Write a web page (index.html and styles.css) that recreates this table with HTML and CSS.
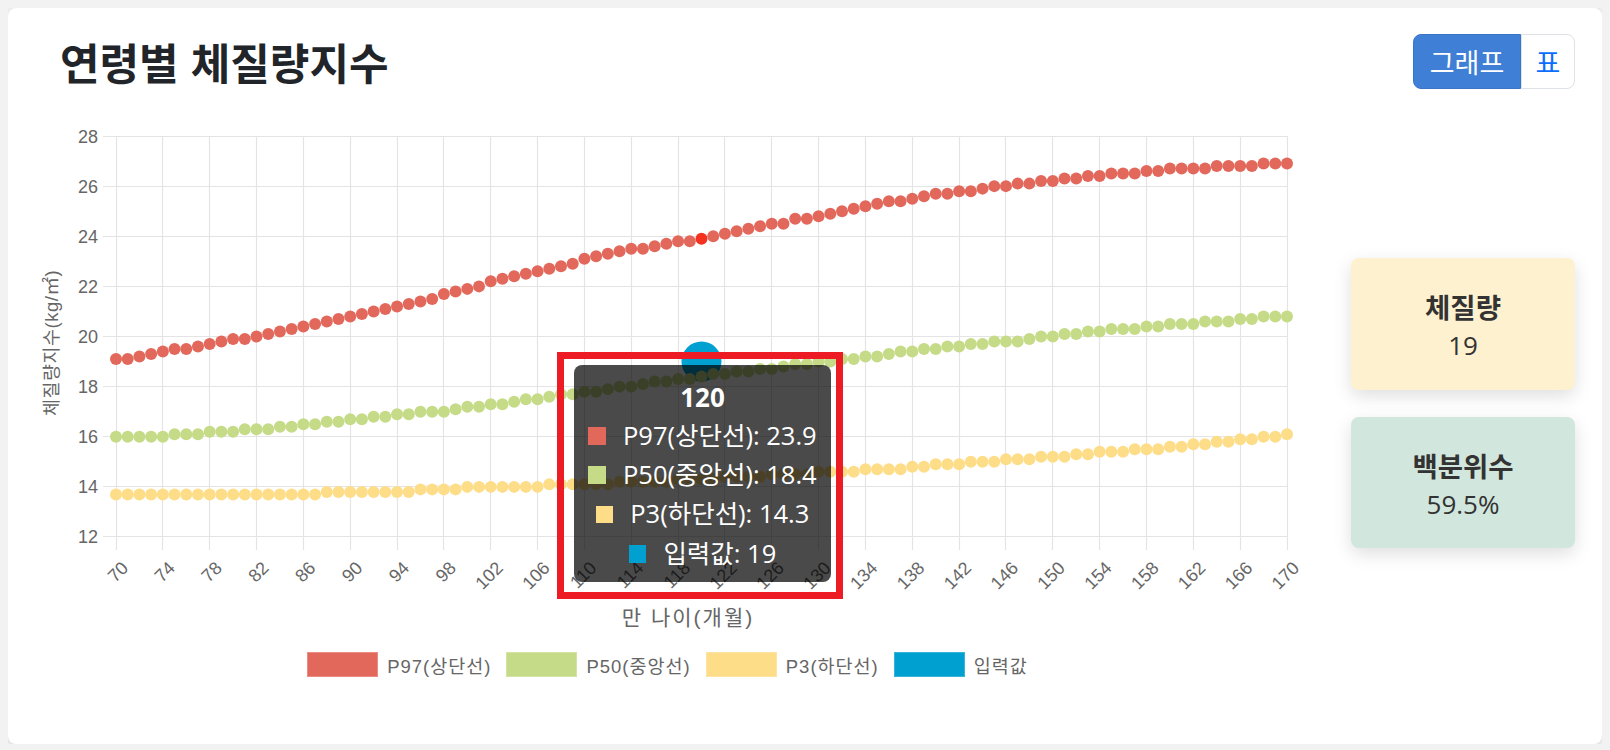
FILE: index.html
```html
<!DOCTYPE html>
<html lang="ko">
<head>
<meta charset="utf-8">
<title>연령별 체질량지수</title>
<link rel="stylesheet" href="styles.css">
</head>
<body>
<main class="card">
  <header class="card-head">
    <h1 class="title">연령별 체질량지수</h1>
    <div class="btn-group">
      <button class="btn btn-active" type="button">그래프</button>
      <button class="btn btn-plain" type="button">표</button>
    </div>
  </header>
  <section class="card-body">
    <div class="chart-col">
      <div class="chart-wrap">
        <svg class="chart" width="1265" height="535" viewBox="35 100 1265 535">
          <g class="grid">
            <path d="M103 136.5H1287.5M103 186.5H1287.5M103 236.5H1287.5M103 286.5H1287.5M103 336.5H1287.5M103 386.5H1287.5M103 436.5H1287.5M103 486.5H1287.5M103 536.5H1287.5"/>
            <path d="M116.5 136V550M162.5 136V550M209.5 136V550M256.5 136V550M303.5 136V550M350.5 136V550M397.5 136V550M443.5 136V550M490.5 136V550M537.5 136V550M584.5 136V550M631.5 136V550M678.5 136V550M724.5 136V550M771.5 136V550M818.5 136V550M865.5 136V550M912.5 136V550M959.5 136V550M1005.5 136V550M1052.5 136V550M1099.5 136V550M1146.5 136V550M1193.5 136V550M1240.5 136V550M1287.5 136V550"/>
          </g>
          <g class="tick y-tick">
            <text x="98" y="142.5">28</text>
            <text x="98" y="192.6">26</text>
            <text x="98" y="242.6">24</text>
            <text x="98" y="292.7">22</text>
            <text x="98" y="342.7">20</text>
            <text x="98" y="392.8">18</text>
            <text x="98" y="442.9">16</text>
            <text x="98" y="492.9">14</text>
            <text x="98" y="543">12</text>
          </g>
          <g class="tick x-tick">
            <text transform="translate(124.7 564.6) rotate(-45)" y="6.5">70</text>
            <text transform="translate(171.5 564.6) rotate(-45)" y="6.5">74</text>
            <text transform="translate(218.4 564.6) rotate(-45)" y="6.5">78</text>
            <text transform="translate(265.2 564.6) rotate(-45)" y="6.5">82</text>
            <text transform="translate(312.1 564.6) rotate(-45)" y="6.5">86</text>
            <text transform="translate(358.9 564.6) rotate(-45)" y="6.5">90</text>
            <text transform="translate(405.7 564.6) rotate(-45)" y="6.5">94</text>
            <text transform="translate(452.6 564.6) rotate(-45)" y="6.5">98</text>
            <text transform="translate(499.4 564.6) rotate(-45)" y="6.5">102</text>
            <text transform="translate(546.3 564.6) rotate(-45)" y="6.5">106</text>
            <text transform="translate(593.1 564.6) rotate(-45)" y="6.5">110</text>
            <text transform="translate(639.9 564.6) rotate(-45)" y="6.5">114</text>
            <text transform="translate(686.8 564.6) rotate(-45)" y="6.5">118</text>
            <text transform="translate(733.6 564.6) rotate(-45)" y="6.5">122</text>
            <text transform="translate(780.5 564.6) rotate(-45)" y="6.5">126</text>
            <text transform="translate(827.3 564.6) rotate(-45)" y="6.5">130</text>
            <text transform="translate(874.1 564.6) rotate(-45)" y="6.5">134</text>
            <text transform="translate(921.0 564.6) rotate(-45)" y="6.5">138</text>
            <text transform="translate(967.8 564.6) rotate(-45)" y="6.5">142</text>
            <text transform="translate(1014.7 564.6) rotate(-45)" y="6.5">146</text>
            <text transform="translate(1061.5 564.6) rotate(-45)" y="6.5">150</text>
            <text transform="translate(1108.3 564.6) rotate(-45)" y="6.5">154</text>
            <text transform="translate(1155.2 564.6) rotate(-45)" y="6.5">158</text>
            <text transform="translate(1202.0 564.6) rotate(-45)" y="6.5">162</text>
            <text transform="translate(1248.9 564.6) rotate(-45)" y="6.5">166</text>
            <text transform="translate(1295.7 564.6) rotate(-45)" y="6.5">170</text>
          </g>
          <text class="axis-title axis-title-y" transform="translate(51 343) rotate(-90)">체질량지수(kg/㎡)</text>
          <text class="axis-title axis-title-x" x="688" y="617">만 나이(개월)</text>
          <circle class="input-pt" cx="701.5" cy="361.6" r="20"/>
          <g id="series"></g>
        </svg>
        <div class="tooltip">
          <div class="tt-title">120</div>
          <div class="tt-line"><span class="tt-box sw-p97"></span>P97(상단선): 23.9</div>
          <div class="tt-line"><span class="tt-box sw-p50"></span>P50(중앙선): 18.4</div>
          <div class="tt-line"><span class="tt-box sw-p3"></span>P3(하단선): 14.3</div>
          <div class="tt-line"><span class="tt-box sw-input"></span>입력값: 19</div>
        </div>
        <div class="highlight"></div>
      </div>
      <ul class="legend">
        <li class="legend-item"><span class="swatch sw-p97"></span>P97(상단선)</li>
        <li class="legend-item"><span class="swatch sw-p50"></span>P50(중앙선)</li>
        <li class="legend-item"><span class="swatch sw-p3"></span>P3(하단선)</li>
        <li class="legend-item"><span class="swatch sw-input"></span>입력값</li>
      </ul>
    </div>
    <aside class="stats">
      <div class="stat stat-yellow">
        <div class="stat-label">체질량</div>
        <div class="stat-value">19</div>
      </div>
      <div class="stat stat-green">
        <div class="stat-label">백분위수</div>
        <div class="stat-value">59.5%</div>
      </div>
    </aside>
  </section>
</main>
<script src="script.js"></script>
</body>
</html>
```

FILE: styles.css
```css
html, body {
  margin: 0;
}
body {
  margin: 8px;
  background: #f2f2f2;
  font-family: "Noto Sans CJK KR", "Noto Sans", sans-serif;
}
.card {
  box-sizing: border-box;
  height: 736px;
  background: #fff;
  border-radius: 8px;
  box-shadow: 0 1px 7px rgba(0, 0, 0, 0.13);
  padding: 26px 27px 0 27px;
}
.card-head {
  display: flex;
  justify-content: space-between;
  align-items: center;
  height: 55px;
}
.title {
  margin: 0 0 0 25px;
  font-family: "Noto Sans CJK KR", sans-serif;
  font-size: 43px;
  font-weight: 700;
  line-height: 1;
  color: #212529;
}
.btn-group {
  display: flex;
}
.btn {
  box-sizing: border-box;
  height: 55px;
  padding: 0;
  font-family: "Noto Sans CJK KR", sans-serif;
  font-size: 27px;
  line-height: 1;
  border: 1px solid #dee2e6;
  cursor: pointer;
}
.btn-active {
  width: 108px;
  background: #3f7fd6;
  border-color: #3a76c8;
  color: #fff;
  border-radius: 8px 0 0 8px;
}
.btn-plain {
  width: 54px;
  background: #fff;
  color: #0d6efd;
  border-radius: 0 8px 8px 0;
}
.card-body {
  display: flex;
  gap: 51px;
  margin-top: 11px;
}
.chart-col {
  width: 1265px;
  flex: none;
}
.chart-wrap {
  position: relative;
  height: 535px;
}
.chart {
  display: block;
  overflow: visible;
}
.grid path {
  fill: none;
  stroke: #e4e4e4;
  stroke-width: 1.2;
}
.tick text {
  font-family: "Liberation Sans", "Noto Sans CJK KR", sans-serif;
  font-size: 18px;
  fill: #666;
  text-anchor: end;
}
.axis-title {
  font-family: "Liberation Sans", "Noto Sans CJK KR", sans-serif;
  fill: #666;
  text-anchor: middle;
  dominant-baseline: central;
}
.axis-title-y {
  font-size: 18.5px;
  letter-spacing: 0.5px;
}
.axis-title-x {
  font-size: 21px;
  letter-spacing: 2px;
}
.input-pt {
  fill: #00a0d0;
}
.pt {
  stroke: none;
}
.pt.p97 { fill: #e3685c; }
.pt.p50 { fill: #c5db87; }
.pt.p3 { fill: #fedd88; }
.pt.hot { fill: #f5321f; }

.swatch {
  display: block;
  box-sizing: border-box;
  width: 71px;
  height: 25px;
  border-width: 1.5px;
  border-style: solid;
}
.sw-p97 { background: #e3685c; border-color: #eb8c83; }
.sw-p50 { background: #c5db87; border-color: #d3e4a3; }
.sw-p3 { background: #fedd88; border-color: #fee4a3; }
.sw-input { background: #00a0d0; border-color: #3ab3da; }

.tooltip {
  position: absolute;
  left: 539px;
  top: 265px;
  width: 257px;
  height: 217px;
  box-sizing: border-box;
  padding-top: 12.6px;
  background: rgba(0, 0, 0, 0.71);
  border-radius: 8px;
  color: #fff;
  text-align: center;
  font-family: "Open Sans", "Noto Sans CJK KR", sans-serif;
}
.tt-title {
  font-size: 26px;
  font-weight: 700;
  line-height: 38px;
}
.tt-line {
  font-size: 25.5px;
  line-height: 39.4px;
  white-space: nowrap;
}
.tt-box {
  display: inline-block;
  width: 17.7px;
  height: 17.7px;
  margin-right: 17px;
  vertical-align: baseline;
}
.highlight {
  position: absolute;
  left: 522px;
  top: 252px;
  width: 286px;
  height: 247px;
  box-sizing: border-box;
  border: 7px solid #ed1c24;
}
.legend {
  display: flex;
  justify-content: center;
  gap: 15px;
  list-style: none;
  margin: 17px 0 0 0;
  padding: 0;
}
.legend-item {
  display: flex;
  align-items: center;
  gap: 9px;
  height: 25px;
  font-family: "Liberation Sans", "Noto Sans CJK KR", sans-serif;
  font-size: 18.5px;
  letter-spacing: 1px;
  color: #666;
}
.stats {
  width: 224px;
  flex: none;
  display: flex;
  flex-direction: column;
  gap: 27px;
  margin-top: 158px;
}
.stat {
  box-sizing: border-box;
  height: 132px;
  padding-top: 4px;
  border-radius: 8px;
  display: flex;
  flex-direction: column;
  align-items: center;
  justify-content: center;
  box-shadow: 0 6px 18px rgba(0, 0, 0, 0.13);
  color: #333;
  font-family: "Open Sans", "Noto Sans CJK KR", sans-serif;
}
.stat-green {
  height: 131px;
  background: #d1e6dc;
}
.stat-yellow {
  background: #fef1cf;
}
.stat-label {
  font-family: "Noto Sans CJK KR", sans-serif;
  font-size: 27.5px;
  font-weight: 700;
  line-height: 39px;
}
.stat-value {
  font-size: 26px;
  line-height: 39px;
}
```

FILE: script.js
```js
(function () {
  var X0 = 116, DX = 11.71, Y0 = 537, DY = 25.0625;
  var NS = 'http://www.w3.org/2000/svg';
  var series = [
    { cls: 'p3', a: [[70,13.7],[87,13.7],[88,13.8],[96,13.85],[100,13.95],[104,14.0],[110,14.1],[116,14.2],[120,14.3],[126,14.45],[130,14.55],[136,14.7],[140,14.85],[146,15.05],[150,15.2],[154,15.35],[158,15.5],[162,15.65],[166,15.85],[168,15.95],[170,16.1]] },
    { cls: 'p50', a: [[70,16.0],[73,16.0],[76,16.1],[80,16.2],[84,16.4],[88,16.55],[92,16.75],[96,16.95],[100,17.15],[104,17.4],[108,17.65],[112,17.9],[116,18.15],[120,18.4],[124,18.6],[128,18.85],[132,19.05],[136,19.3],[140,19.5],[144,19.7],[148,19.9],[152,20.1],[156,20.3],[160,20.45],[164,20.6],[168,20.75],[170,20.8]] },
    { cls: 'p97', a: [[70,19.05],[74,19.4],[78,19.7],[82,20.0],[86,20.4],[90,20.8],[94,21.2],[98,21.65],[102,22.15],[106,22.6],[110,23.05],[114,23.45],[118,23.75],[120,23.9],[124,24.25],[128,24.65],[132,25.0],[136,25.35],[140,25.65],[144,25.9],[148,26.1],[152,26.3],[156,26.5],[160,26.65],[164,26.75],[168,26.85],[170,26.9]] }
  ];
  function val(a, m) {
    var i = 0;
    while (i < a.length - 2 && a[i + 1][0] < m) i++;
    var m0 = a[i][0], v0 = a[i][1], m1 = a[i + 1][0], v1 = a[i + 1][1];
    var v = v0 + (v1 - v0) * (m - m0) / (m1 - m0);
    return Math.round(v * 10) / 10;
  }
  var g = document.getElementById('series');
  series.forEach(function (s) {
    for (var m = 70; m <= 170; m++) {
      var v = val(s.a, m);
      var c = document.createElementNS(NS, 'circle');
      c.setAttribute('cx', (X0 + (m - 70) * DX).toFixed(2));
      c.setAttribute('cy', (Y0 - (v - 12) * DY).toFixed(2));
      c.setAttribute('r', '6');
      c.setAttribute('class', 'pt ' + s.cls + (s.cls === 'p97' && m === 120 ? ' hot' : ''));
      g.appendChild(c);
    }
  });
})();
```
